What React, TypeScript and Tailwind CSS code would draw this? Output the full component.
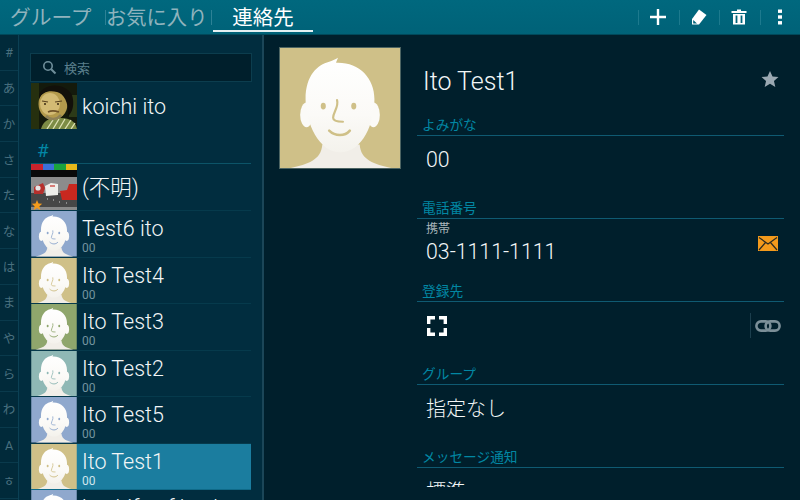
import type { ReactNode } from "react"

const font = "font-['Roboto','Noto_Sans_CJK_JP',sans-serif]"

function Face({ bg }: { bg: string }) {
  return (
    <svg viewBox="0 0 122 122" className="block w-full h-full">
      <defs>
        <linearGradient id="skin" x1="0" y1="0" x2="0" y2="1">
          <stop offset="0" stopColor="#ffffff" />
          <stop offset="0.6" stopColor="#fbfaf7" />
          <stop offset="1" stopColor="#f4f2ec" />
        </linearGradient>
      </defs>
      <rect width="122" height="122" fill={bg} />
      <path d="M11 122 C28 118 42 114 43 98 L81 98 C82 114 96 118 113 122 Z" fill="#f1eee8" />
      <ellipse cx="27" cy="68" rx="6.5" ry="12.5" fill="#fbfaf7" />
      <ellipse cx="95" cy="68" rx="6.5" ry="12.5" fill="#fbfaf7" />
      <path d="M26 52 C26 28 38 17 50 14 C53 13 56 12 59 10 C58 12 57.5 13.5 57 15 C80 14 96 30 96 52 C96 76 84 106 61 106 C40 106 26 76 26 52 Z" fill="url(#skin)" />
      <ellipse cx="44" cy="59" rx="2.6" ry="3.4" fill={bg} />
      <ellipse cx="75" cy="59" rx="2.6" ry="3.4" fill={bg} />
      <path d="M58 53 C60 60 54 65 54 71 C54 75 60 75 64 75" fill="none" stroke={bg} strokeWidth="2.2" strokeLinecap="round" />
      <path d="M50 84 C56 90 66 90 71 84" fill="none" stroke={bg} strokeWidth="2.6" strokeLinecap="round" />
    </svg>
  )
}

function KoichiPhoto() {
  return (
    <svg viewBox="0 0 46 46" className="block w-full h-full blur-[0.6px]">
      <rect width="46" height="46" fill="#141a0c" />
      <rect width="8" height="46" fill="#26300f" />
      <rect x="38" y="12" width="8" height="22" fill="#2c3a18" />
      <path d="M10 46 C12 38 18 35 26 35 C36 35 44 36 46 46 Z" fill="#7d8c45" />
      <path d="M16 46 L22 37 M22 46 L28 36 M28 46 L34 36 M34 46 L40 37 M40 46 L44 40" stroke="#dfe2b4" strokeWidth="1.3" />
      <ellipse cx="22" cy="21" rx="14.5" ry="16" fill="#b39a4c" />
      <ellipse cx="19" cy="21" rx="10" ry="11" fill="#d3bb74" />
      <path d="M8 13 C9 2 32 -3 41 12 C44 22 41 30 37 33 C38 22 34 11 26 9 C18 7 11 9 8 16 Z" fill="#12100a" />
      <path d="M11 18 L17 19 M24 19 L31 18" stroke="#5a4420" strokeWidth="1.2" />
      <circle cx="14" cy="21" r="1" fill="#3a2a12" />
      <circle cx="27" cy="21" r="1" fill="#3a2a12" />
      <path d="M17 29 C21 27 25 28 28 29" stroke="#6e5228" strokeWidth="1.6" fill="none" />
      <path d="M15 33 C19 37 26 37 30 32" stroke="#8e8157" strokeWidth="2.5" fill="none" />
    </svg>
  )
}

function UnknownPhoto() {
  return (
    <svg viewBox="0 0 46 46" className="block w-full h-full">
      <rect width="46" height="46" fill="#8c8c8c" />
      <rect width="46" height="13" fill="#0a0a0a" />
      <rect width="12" height="6" fill="#c8232c" />
      <rect x="12" width="11" height="6" fill="#3b70d8" />
      <rect x="23" width="12" height="6" fill="#1aa33d" />
      <rect x="35" width="11" height="6" fill="#e8b81a" />
      <rect y="29" width="46" height="14" fill="#474747" />
      <path d="M3 23 L12 19 L14 24 L12 30 L3 30 Z" fill="#b6302c" />
      <circle cx="7" cy="24" r="2.6" fill="#e5e5e5" />
      <path d="M14 22 L20 19 L27 20 L27 31 L15 32 Z" fill="#eeeeea" />
      <path d="M19 22 L24 22" stroke="#c8332c" strokeWidth="1.2" />
      <path d="M29 27 L36 26 L38 20 L46 20 L46 36 L31 36 Z" fill="#c9281f" />
      <path d="M16 35 h1 M22 36 h1 M28 38 h1 M35 39 h1" stroke="#d0d0d0" strokeWidth="1" />
      <rect y="43" width="46" height="3" fill="#8a8a8a" />
      <path d="M6 36 L7.5 39.5 L11.2 39.8 L8.4 42.2 L9.3 46 L6 44 L2.7 46 L3.6 42.2 L0.8 39.8 L4.5 39.5 Z" fill="#f39a1c" />
    </svg>
  )
}

const rows = [
  { name: "Test6 ito", bg: "#8fa8cd" },
  { name: "Ito Test4", bg: "#cfc088" },
  { name: "Ito Test3", bg: "#8fa66c" },
  { name: "Ito Test2", bg: "#8fb8b5" },
  { name: "Ito Test5", bg: "#8fa8cd" },
  { name: "Ito Test1", bg: "#cfc088", on: true },
  { name: "koshif osf kosh", bg: "#8fa8cd" },
]

const index = ["#", "あ", "か", "さ", "た", "な", "は", "ま", "や", "ら", "わ", "A", "ㅎ"]

function Section({ label, children }: { label: string; children: ReactNode }) {
  return (
    <div className="h-[83px]">
      <div className="h-[20px] pl-[5px] text-[13.7px] leading-[18px] text-[#0287a3] border-b border-[#0f5a72]">{label}</div>
      {children}
    </div>
  )
}

function ActionCell({ children }: { children: ReactNode }) {
  return (
    <div className="relative w-[40.5px] flex items-center justify-center">
      <div className="absolute left-0 top-[10px] h-[15px] w-px bg-[#1d7a8e]"></div>
      {children}
    </div>
  )
}

export default function App() {
  return (
    <div className={`w-[800px] h-[500px] overflow-hidden flex flex-col bg-[#001f2c] ${font}`}>
      {/* action bar */}
      <div className="h-[35px] shrink-0 flex items-stretch bg-gradient-to-b from-[#00687e] to-[#006278] border-b border-[#00485a]">
        <div className="w-[105px] pl-[10px] text-[20.7px] leading-[36px] text-[#8fb3bd] whitespace-nowrap">グループ</div>
        <div className="w-px h-[15px] mt-[10px] bg-[#2d8296]"></div>
        <div className="w-[105px] text-[20.3px] leading-[36px] text-[#8fb3bd] whitespace-nowrap">お気に入り</div>
        <div className="w-px h-[15px] mt-[10px] bg-[#2d8296]"></div>
        <div className="w-[100px] ml-px h-[32px] border-b-2 border-[#e4f0f3] text-center text-[20.5px] leading-[36px] text-white">連絡先</div>
        <div className="ml-auto flex">
          <ActionCell>
            <svg width="18" height="18" viewBox="0 0 18 18"><path d="M9 1v16M1 9h16" stroke="#fff" strokeWidth="2.4" /></svg>
          </ActionCell>
          <ActionCell>
            <svg width="16" height="16" viewBox="0 0 16 16">
              <path d="M8 .5 L15.5 6 L8 15.5 L1 15.5 L1 10 Z" fill="#fff" />
              <path d="M2.2 11 L6 14.4 L2.2 14.4 Z" fill="#00657b" />
            </svg>
          </ActionCell>
          <ActionCell>
            <svg width="16" height="16" viewBox="0 0 16 16">
              <path d="M6 0.5h4v1.5h5.5v2H.5v-2H6z" fill="#fff" />
              <path d="M2 5h12v10.5H2z M4.6 6.5v7.5h1.8V6.5z M9.6 6.5v7.5h1.8V6.5z" fill="#fff" fillRule="evenodd" />
            </svg>
          </ActionCell>
          <ActionCell>
            <svg width="6" height="16" viewBox="0 0 6 16">
              <rect x="1" y="0.5" width="4" height="3.4" fill="#fff" />
              <rect x="1" y="6.3" width="4" height="3.4" fill="#fff" />
              <rect x="1" y="12.1" width="4" height="3.4" fill="#fff" />
            </svg>
          </ActionCell>
        </div>
      </div>

      <div className="flex flex-1 min-h-0">
        {/* contact list */}
        <div className="w-[264px] shrink-0 flex bg-[#012d3f] border-r-2 border-[#1b4658]">
          <div className="w-[19px] shrink-0 border-r border-[#0b4054] bg-[#012a3a]">
            {index.map((c) => (
              <div key={c} className="h-[35.7px] pt-[3px] flex items-center justify-center border-b border-[#0a3a4c] text-[12.5px] text-[#49707f]">
                {c}
              </div>
            ))}
          </div>
          <div className="w-[222px] ml-[11px] pt-[18px] overflow-hidden">
            <div className="h-[29px] flex items-center pl-[11px] bg-[#001f2c] border border-[#0c3d4e]">
              <svg width="15" height="15" viewBox="0 0 15 15">
                <circle cx="6" cy="6" r="4.2" fill="none" stroke="#6f8f9b" strokeWidth="1.6" />
                <path d="M9.2 9.2 L13.5 13.5" stroke="#6f8f9b" strokeWidth="2" />
              </svg>
              <span className="ml-[7px] text-[13px] mt-[2px] text-[#5b7f8d]">検索</span>
            </div>
            <div className="w-[220px] ml-px">
              <div className="h-[46px] mt-px flex items-center">
                <div className="w-[46px] h-[46px] shrink-0 overflow-hidden"><KoichiPhoto /></div>
                <span className="ml-[5px] mt-[3px] text-[21.5px] font-light text-[#f2f6f7]">koichi ito</span>
              </div>
              <div className="h-[35px] pl-[6px] border-b border-[#0c5468] text-[19px] leading-[43px] text-[#0287a5]">#</div>
              <div className="h-[47px] flex border-b border-[#063a4c]">
                <div className="w-[46px] h-[46px] shrink-0"><UnknownPhoto /></div>
                <span className="ml-[5px] text-[21.5px] font-light leading-[48px] text-[#f2f6f7]">(不明)</span>
              </div>
              {rows.map((r) => (
                <div key={r.name} className={`h-[46.5px] flex border-b ${r.on ? "bg-[#1b7d9f] border-[#0f6a88]" : "border-[#063a4c]"}`}>
                  <div className="w-[46px] shrink-0"><Face bg={r.bg} /></div>
                  <div className="ml-[5px] whitespace-nowrap">
                    <div className="text-[21.5px] font-light leading-[25px] mt-[5px] text-[#f2f6f7]">{r.name}</div>
                    <div className={`text-[12px] leading-[14px] ${r.on ? "text-[#cfe6ee]" : "text-[#74949f]"}`}>00</div>
                  </div>
                </div>
              ))}
            </div>
          </div>
        </div>

        {/* contact detail */}
        <div className="flex-1 flex items-start">
          <div className="w-[122px] h-[122px] ml-[15px] mt-[12px] shrink-0 border border-[#4d6462]"><Face bg="#cfc088" /></div>
          <div className="w-[367px] ml-[16px] h-[451.5px] overflow-hidden">
            <div className="h-[81px] pt-[33px] pl-[6px] pr-[5px] flex justify-between text-[25px] font-light leading-[28px] text-[#f2f6f7]">
              <span>Ito Test1</span>
              <svg width="18" height="18" viewBox="0 0 20 20" className="mt-[2px]">
                <path d="M10 1 L12.8 7.2 L19.4 7.8 L14.4 12.2 L15.9 18.8 L10 15.3 L4.1 18.8 L5.6 12.2 L.6 7.8 L7.2 7.2 Z" fill="#9aa8b2" />
              </svg>
            </div>
            <Section label="よみがな">
              <div className="pl-[9px] pt-[11px] text-[21.3px] font-light leading-[26px] text-[#f2f6f7]">00</div>
            </Section>
            <Section label="電話番号">
              <div className="flex pl-[9px]">
                <div>
                  <div className="text-[12px] leading-[18px] mt-px text-[#a9b6bb]">携帯</div>
                  <div className="text-[21.3px] font-light leading-[26px] mt-px text-[#f2f6f7]">03-1111-1111</div>
                </div>
                <svg width="20" height="15" viewBox="0 0 20 15" className="ml-auto mt-[17px] mr-[6px]">
                  <rect width="20" height="15" fill="#f39a1c" />
                  <path d="M1 1.5 L10 8 L19 1.5 M1 14 L7.5 6.5 M19 14 L12.5 6.5" stroke="#2a2a22" strokeWidth="1.2" fill="none" />
                </svg>
              </div>
            </Section>
            <Section label="登録先">
              <div className="flex pl-[10px] pt-[14px]">
                <svg width="20" height="20" viewBox="0 0 20 20">
                  <path d="M1.7 8V1.7H8 M12 1.7H18.3V8 M18.3 12V18.3H12 M8 18.3H1.7V12" fill="none" stroke="#fff" strokeWidth="3.4" />
                </svg>
                <div className="ml-auto -mt-[3px] pl-[4px] h-[25px] border-l border-[#1b3e4d] flex items-center mr-[3px]">
                  <svg width="26" height="12" viewBox="0 0 26 12">
                    <rect x="1.4" y="1.4" width="14" height="9.2" rx="4.6" fill="none" stroke="#7b8f98" strokeWidth="2.6" />
                    <rect x="10.6" y="1.4" width="14" height="9.2" rx="4.6" fill="none" stroke="#7b8f98" strokeWidth="2.6" />
                  </svg>
                </div>
              </div>
            </Section>
            <Section label="グループ">
              <div className="pl-[9px] pt-[11px] text-[20px] font-light leading-[26px] text-[#f2f6f7]">指定なし</div>
            </Section>
            <Section label="メッセージ通知">
              <div className="pl-[9px] pt-[11px] text-[20px] font-light leading-[26px] text-[#f2f6f7]">標準</div>
            </Section>
          </div>
        </div>
      </div>
    </div>
  )
}
